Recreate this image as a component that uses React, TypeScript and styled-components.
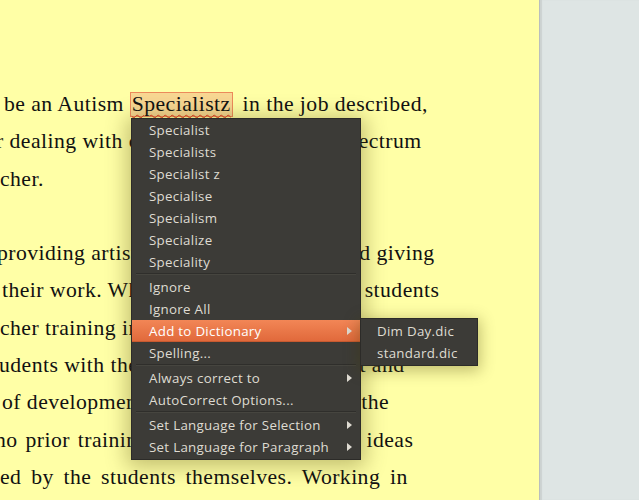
import React from "react";
import styled, { createGlobalStyle } from "styled-components";

const Global = createGlobalStyle`
  html, body { margin: 0; padding: 0; }
  body { width: 639px; height: 500px; overflow: hidden; background: #dee5e4; }
  #root { height: 500px; }
`;

const Screen = styled.div`
  display: flex;
  width: 639px;
  height: 500px;
  overflow: hidden;
`;

const Page = styled.div`
  position: relative;
  width: 539px;
  height: 500px;
  background: #ffffa6;
  overflow: hidden;
  flex-shrink: 0;
`;

const Side = styled.div`
  flex: 1;
  background: #dee5e4;
  border-left: 1px solid #b9bebd;
  box-shadow: inset 2px 0 1px #ccd2d1;
`;

const TextBlock = styled.div`
  padding-top: 86px;
  font-family: "Liberation Serif", "Times New Roman", serif;
  font-size: 21.7px;
  letter-spacing: 0.45px;
  color: #111;
`;

const Line = styled.div<{ $indent: number; $ws?: number }>`
  height: 37.3px;
  line-height: 37.3px;
  white-space: nowrap;
  margin-left: ${(p) => p.$indent}px;
  word-spacing: ${(p) => p.$ws ?? 0}px;
`;

const Under = styled.span<{ $w: number }>`
  display: inline-block;
  width: ${(p) => p.$w}px;
  overflow: hidden;
  vertical-align: top;
`;

const Misspelled = styled.span`
  display: inline-block;
  line-height: 23px;
  padding: 0 1px 0 1px;
  margin-right: 4px;
  background: #f8d792;
  border: 1px solid #ec8a5b;
  text-decoration: underline wavy #e23a1c;
  text-decoration-thickness: 1px;
  text-underline-offset: 3px;
`;

const Menu = styled.div`
  position: absolute;
  left: 131px;
  top: 118px;
  width: 228px;
  padding: 0 0 1px;
  background: #3c3b37;
  border: 1px solid #2c2b28;
  box-shadow: 0 3px 20px 4px rgba(70, 60, 0, 0.33);
  font-family: "Open Sans", "Noto Sans", sans-serif;
  font-size: 13.3px;
  letter-spacing: 0.3px;
  color: #dfdbd2;
`;

const Item = styled.div<{ $active?: boolean }>`
  position: relative;
  display: flex;
  align-items: center;
  justify-content: space-between;
  height: 22px;
  padding: 0 8px 0 17px;
  white-space: nowrap;
  color: ${(p) => (p.$active ? "#ffffff" : "#dfdbd2")};
  background: ${(p) =>
    p.$active ? "linear-gradient(#f28656, #e0683a)" : "transparent"};
  box-shadow: ${(p) => (p.$active ? "inset 0 -1px 0 #c85a30" : "none")};
`;

const Separator = styled.div`
  height: 3px;
  margin: 0 4px;
  border-top: 1px solid #2f2e2b;
  box-sizing: border-box;
  box-shadow: inset 0 1px 0 #46453f;
`;

const Arrow = styled.span`
  width: 0;
  height: 0;
  border-top: 4px solid transparent;
  border-bottom: 4px solid transparent;
  border-left: 5px solid #dfdbd2;
`;

const SubMenu = styled.div`
  position: absolute;
  left: 228px;
  top: -2px;
  width: 116px;
  padding: 1px 0;
  background: #3c3b37;
  border: 1px solid #2c2b28;
  box-shadow: 0 3px 14px 2px rgba(70, 60, 0, 0.33);
  letter-spacing: 0.3px;
`;

const SubItem = styled.div`
  height: 22px;
  line-height: 22px;
  padding-left: 16px;
  color: #dfdbd2;
  white-space: nowrap;
`;

type Entry = { label: string; sub?: boolean; active?: boolean } | "sep";

const entries: Entry[] = [
  { label: "Specialist" },
  { label: "Specialists" },
  { label: "Specialist z" },
  { label: "Specialise" },
  { label: "Specialism" },
  { label: "Specialize" },
  { label: "Speciality" },
  "sep",
  { label: "Ignore" },
  { label: "Ignore All" },
  { label: "Add to Dictionary", sub: true, active: true },
  { label: "Spelling..." },
  "sep",
  { label: "Always correct to", sub: true },
  { label: "AutoCorrect Options..." },
  "sep",
  { label: "Set Language for Selection", sub: true },
  { label: "Set Language for Paragraph", sub: true },
];

export default function App() {
  return (
    <Screen>
      <Global />
      <Page>
        <TextBlock>
          <Line $indent={4}>
            be an Autism <Misspelled>Specialistz</Misspelled> in the job described,
          </Line>
          <Line $indent={-4}>
            r dealing with c<Under $w={220}>hildren on the autism sp</Under>ectrum
          </Line>
          <Line $indent={0}>cher.</Line>
          <Line $indent={0}>&nbsp;</Line>
          <Line $indent={-3}>
            providing artist<Under $w={222}>ic experiences an</Under>d giving
          </Line>
          <Line $indent={2}>
            their work. Wh<Under $w={219}>en working with the</Under> students
          </Line>
          <Line $indent={0}>cher training in the classroom</Line>
          <Line $indent={-1}>
            udents with th<Under $w={220}>e materials and conte</Under>nt and
          </Line>
          <Line $indent={2}>
            of developmen<Under $w={224}>t and learning, and </Under>the
          </Line>
          <Line $indent={-5} $ws={2}>
            no prior trainin<Under $w={229}>g, with the activity </Under>ideas
          </Line>
          <Line $indent={0} $ws={3.9}>
            ed by the students themselves. Working in
          </Line>
        </TextBlock>
        <Menu>
          {entries.map((e, i) =>
            e === "sep" ? (
              <Separator key={i} />
            ) : (
              <Item key={i} $active={e.active}>
                <span>{e.label}</span>
                {e.sub && <Arrow />}
                {e.active && (
                  <SubMenu>
                    <SubItem>Dim Day.dic</SubItem>
                    <SubItem>standard.dic</SubItem>
                  </SubMenu>
                )}
              </Item>
            )
          )}
        </Menu>
      </Page>
      <Side />
    </Screen>
  );
}
